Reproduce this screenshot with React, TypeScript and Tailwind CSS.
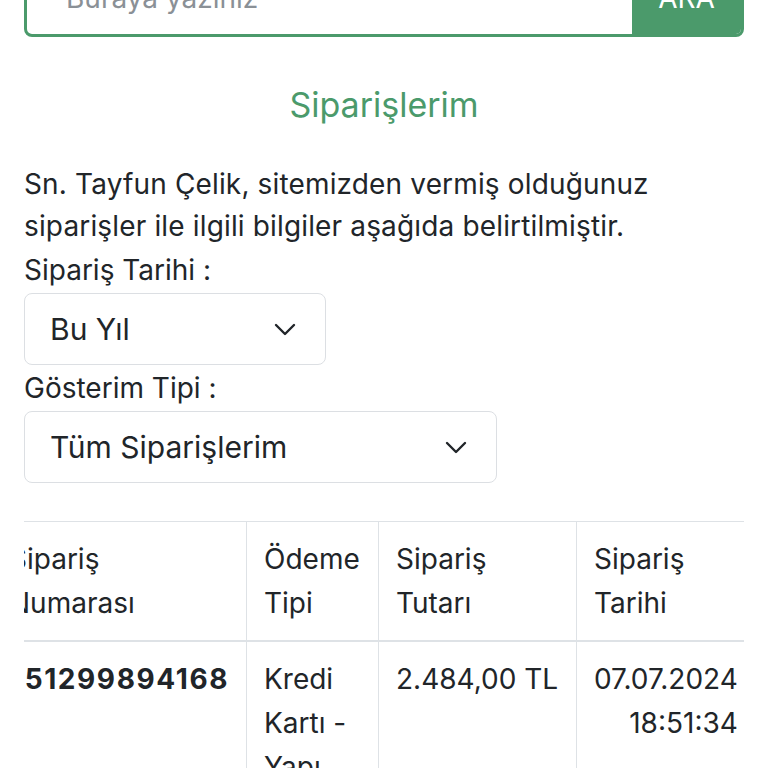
import React from 'react'

const font = { fontFamily: 'Inter, "Noto Sans", sans-serif' }

function Chevron() {
  return (
    <svg width="22" height="13" viewBox="0 0 22 13" fill="none" className="shrink-0">
      <path d="M2 2l9 9 9-9" stroke="#212529" strokeWidth="2.4" strokeLinecap="round" strokeLinejoin="round" />
    </svg>
  )
}

function FakeSelect({ value, width }: { value: string; width: string }) {
  return (
    <div
      className={`flex h-[72px] items-center justify-between rounded-lg border border-[#dcdfe3] bg-white pl-[25px] pr-[29px] text-[30px] text-[#212529] ${width}`}
    >
      <span>{value}</span>
      <Chevron />
    </div>
  )
}

const cell = 'border border-[#dee2e6] px-[17px] py-[15px] align-top'

export default function App() {
  return (
    <div className="min-h-[768px] overflow-hidden bg-white px-6 text-[28px] leading-[42px] text-[#212529]" style={font}>
      {/* search bar, cut at the top of the screenshot */}
      <div className="-mt-[41px] flex h-[78px] overflow-hidden rounded-lg border-[3px] border-[#4b9a6b]">
        <div className="flex flex-1 items-center pl-[39px] text-[28px] text-[#8a9096]">Buraya yazınız</div>
        <button className="flex w-[109px] items-center justify-center bg-[#4b9a6b] text-[28px] text-white">ARA</button>
      </div>

      <h1 className="mt-[47px] text-center text-[34px] leading-[41px] text-[#4b9a6b]">Siparişlerim</h1>

      <p className="mt-[38px] tracking-[0.15px]">
        Sn. Tayfun Çelik, sitemizden vermiş olduğunuz siparişler ile ilgili bilgiler aşağıda belirtilmiştir.
      </p>

      <div className="leading-[46px]">Sipariş Tarihi :</div>
      <FakeSelect value="Bu Yıl" width="w-[302px]" />
      <div className="leading-[46px]">Gösterim Tipi :</div>
      <FakeSelect value="Tüm Siparişlerim" width="w-[473px]" />

      <div className="mt-[38px] overflow-hidden">
        <table className="-ml-[33px] w-[925px] table-fixed border-collapse text-left leading-[44px]">
          <thead>
            <tr className="border-b-2 border-[#dee2e6]">
              <th className={`w-[255px] font-normal ${cell}`}>
                Sipariş
                <br />
                Numarası
              </th>
              <th className={`w-[132px] font-normal ${cell}`}>
                Ödeme
                <br />
                Tipi
              </th>
              <th className={`w-[198px] font-normal ${cell}`}>
                Sipariş
                <br />
                Tutarı
              </th>
              <th className={`w-[180px] font-normal ${cell}`}>
                Sipariş
                <br />
                Tarihi
              </th>
              <th className={`w-[160px] font-normal ${cell}`}>
                Sipariş
                <br />
                Durumu
              </th>
            </tr>
          </thead>
          <tbody>
            <tr>
              <td className={`text-right font-bold tracking-[1.6px] ${cell}`}>51299894168</td>
              <td className={cell}>
                Kredi
                <br />
                Kartı -
                <br />
                Yapı
                <br />
                Kredi
              </td>
              <td className={`whitespace-nowrap ${cell}`}>2.484,00 TL</td>
              <td className={cell}>
                <div className="inline-block text-right">
                  07.07.2024
                  <br />
                  18:51:34
                </div>
              </td>
              <td className={cell}>Teslim Edildi</td>
            </tr>
          </tbody>
        </table>
      </div>
    </div>
  )
}
